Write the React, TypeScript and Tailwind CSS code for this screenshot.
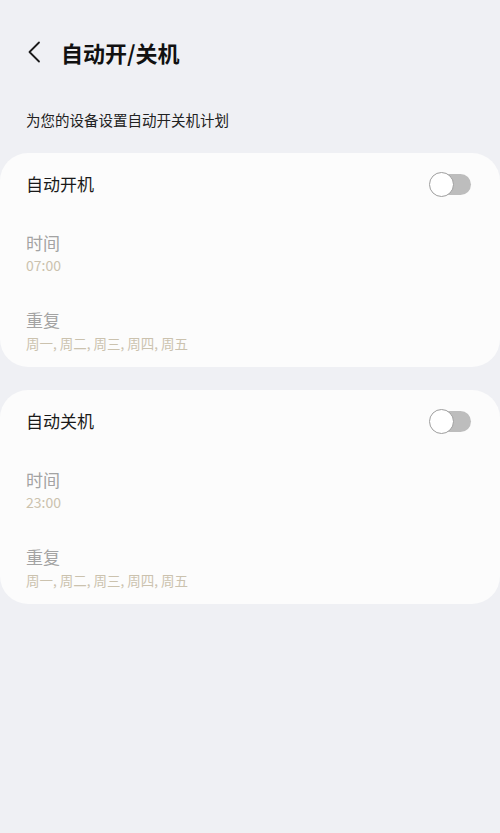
import React from "react";

const font = { fontFamily: '"Noto Sans CJK SC", "Noto Sans", Roboto, sans-serif' };

function Toggle() {
  return (
    <div className="relative w-[42px] h-[25px] flex items-center">
      <div className="absolute left-[2px] right-0 h-[21px] rounded-full bg-[#bdbdbd]" />
      <div className="absolute left-0 w-[25px] h-[25px] rounded-full bg-white border-[1.5px] border-[#9e9e9e]" />
    </div>
  );
}

function Card({ title, time }: { title: string; time: string }) {
  return (
    <div className="bg-[#fcfcfc] rounded-[28px] pl-[26px] pr-[29px] pb-[14px]">
      <div className="h-[62px] flex items-center justify-between">
        <span className="text-[17px] leading-[24px] text-[#1a1a1a]">{title}</span>
        <Toggle />
      </div>
      <div className="mt-[16px]">
        <div className="text-[17px] leading-[24px] text-[#a3a3a3]">时间</div>
        <div className="text-[14px] leading-[20px] text-[#cbc2ae]">{time}</div>
      </div>
      <div className="mt-[33px]">
        <div className="text-[17px] leading-[24px] text-[#a3a3a3]">重复</div>
        <div className="mt-[1px] text-[13.5px] leading-[20px] text-[#cbc2ae]">周一, 周二, 周三, 周四, 周五</div>
      </div>
    </div>
  );
}

export default function App() {
  return (
    <div className="w-[500px] h-[833px] bg-[#eff0f4] overflow-hidden" style={font}>
      <div className="pt-[37px] h-[30px] box-content flex items-center">
        <div className="ml-[27px] w-[16px] h-[24px] flex items-center">
          <svg width="14" height="22" viewBox="0 0 14 22" fill="none">
            <path d="M12 1.5 L2.5 11 L12 20.5" stroke="#1a1a1a" strokeWidth="1.8" strokeLinecap="round" strokeLinejoin="round" />
          </svg>
        </div>
        <div className="ml-[18px] text-[22px] leading-[30px] font-semibold text-[#111]">自动开/关机</div>
      </div>
      <div className="mt-[41px] pl-[26px] text-[14.5px] leading-[24px] text-[#222]">为您的设备设置自动开关机计划</div>
      <div className="mt-[21px] flex flex-col gap-[23px]">
        <Card title="自动开机" time="07:00" />
        <Card title="自动关机" time="23:00" />
      </div>
    </div>
  );
}
